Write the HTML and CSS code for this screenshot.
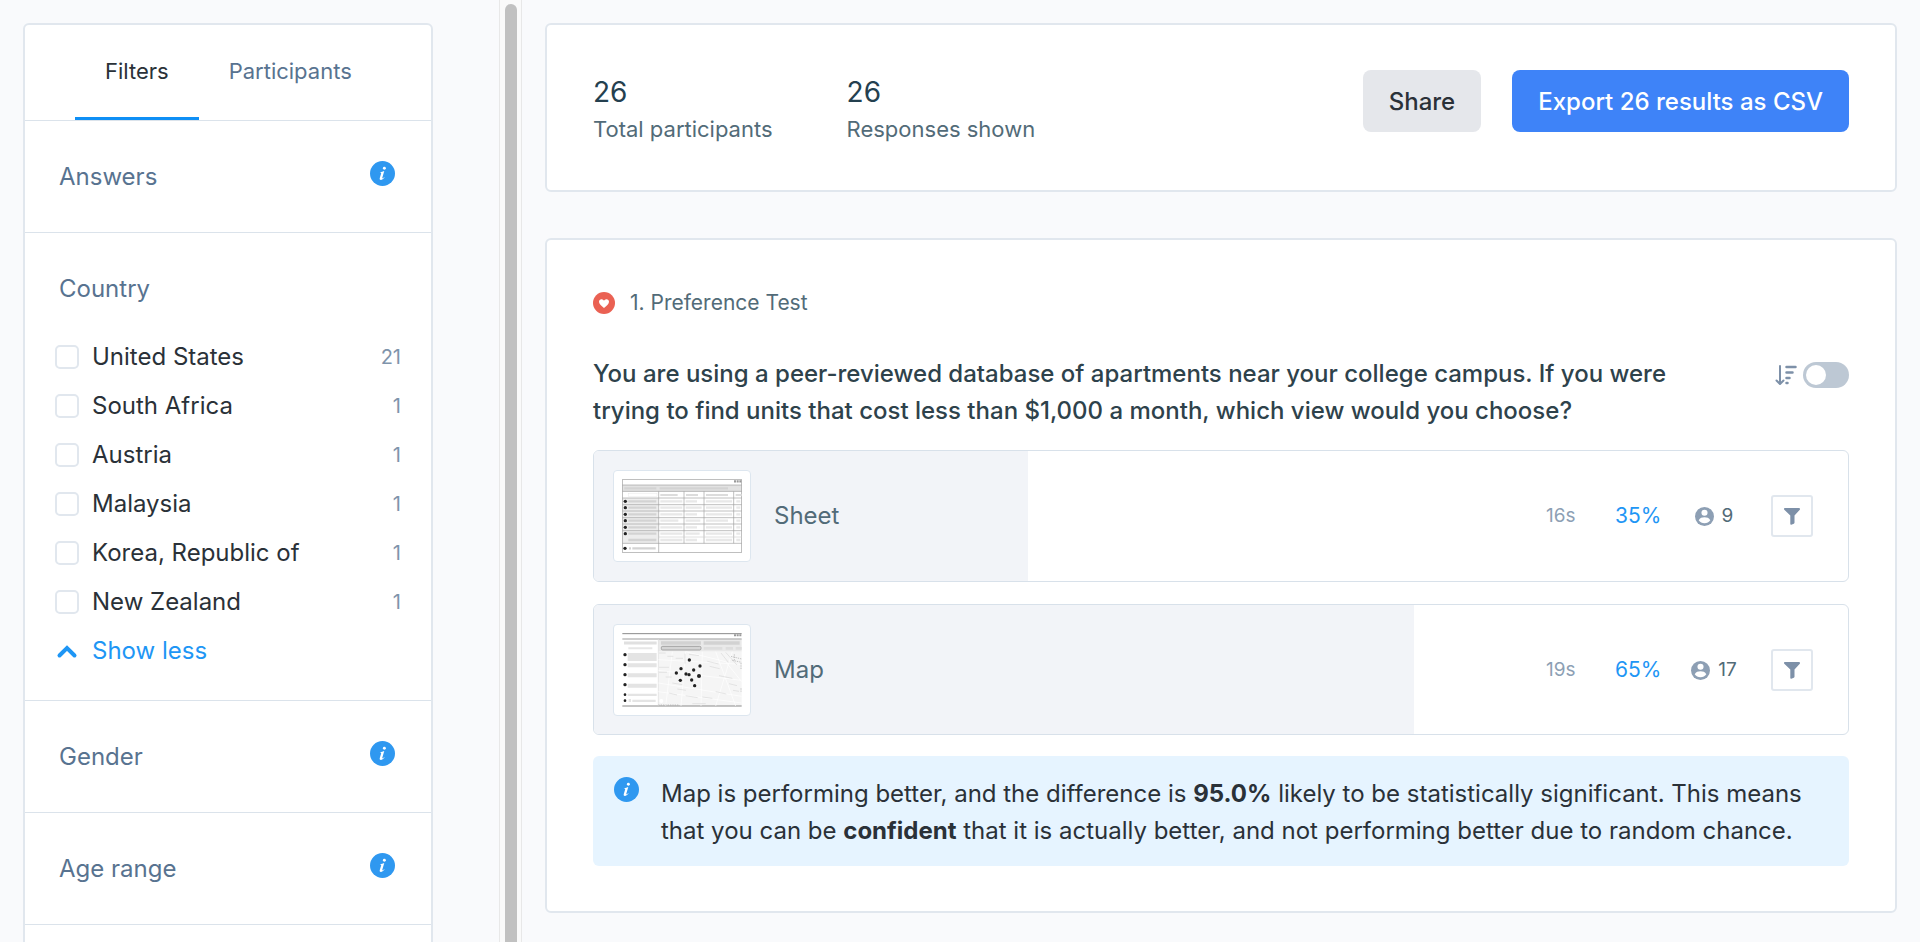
FILE: index.html
```html
<!DOCTYPE html>
<html lang="en">
<head>
<meta charset="utf-8">
<meta name="viewport" content="width=device-width, initial-scale=1">
<title>Test results</title>
<link rel="stylesheet" href="styles.css">
</head>
<body>
<svg class="symbols" aria-hidden="true">
  <symbol id="info" viewBox="0 0 24 24">
    <circle cx="12" cy="12" r="12" fill="#2f98f0"/>
    <circle cx="13.800" cy="6.900" r="1.400" fill="#fff"/>
    <path d="M9.600 10.700c1.500-.1 2.700-.5 4.100-1l-1.900 6.400c-.2.900.5.700 1.700-.6l.5.400c-1.300 1.700-2.500 2.300-3.500 2.300-1.100 0-1.400-.8-1.100-1.900l1.300-4.300c.2-.7-.1-.8-1.200-.9z" fill="#fff"/>
  </symbol>
  <symbol id="person" viewBox="0 0 18 18">
    <circle cx="9" cy="9" r="9" fill="#8d9fb4"/>
    <circle cx="9" cy="5.500" r="2.900" fill="#fff"/>
    <path d="M3.500 12.600C4.800 10.400 6.600 9.800 9 9.800s4.200.6 5.500 2.800C13.200 14.400 11.300 15.300 9 15.300s-4.200-.9-5.500-2.700z" fill="#fff"/>
  </symbol>
  <symbol id="funnel" viewBox="0 0 16 17">
    <path d="M1 0h14c1 0 1.300 1 .8 1.700L10.500 7.500v7.300c0 .5-.3.800-.7 1l-2.500 1c-.5.200-1-.1-1-.7V7.500L.3 1.700C-.3 1 .1 0 1 0z" fill="#7d90a8"/>
  </symbol>
</svg>
<div class="app">
  <aside class="sidebar">
    <div class="panel">
      <nav class="tabs">
        <a class="tab tab-active" href="#filters">Filters</a>
        <a class="tab" href="#participants">Participants</a>
      </nav>
      <section class="group">
        <h2>Answers</h2>
        <svg class="info" role="img" aria-label="Info"><use href="#info"/></svg>
      </section>
      <section class="group group-open">
        <h2>Country</h2>
        <ul class="choices">
          <li><label><input type="checkbox"><span>United States</span></label><span class="count">21</span></li>
          <li><label><input type="checkbox"><span>South Africa</span></label><span class="count">1</span></li>
          <li><label><input type="checkbox"><span>Austria</span></label><span class="count">1</span></li>
          <li><label><input type="checkbox"><span>Malaysia</span></label><span class="count">1</span></li>
          <li><label><input type="checkbox"><span>Korea, Republic of</span></label><span class="count">1</span></li>
          <li><label><input type="checkbox"><span>New Zealand</span></label><span class="count">1</span></li>
        </ul>
        <button class="less" type="button">
          <svg class="chevron" viewBox="0 0 24 24" aria-hidden="true"><path d="M4.500 16.500l7.500-7.500 7.500 7.500" fill="none" stroke="currentColor" stroke-width="4" stroke-linecap="round" stroke-linejoin="miter"/></svg>
          Show less
        </button>
      </section>
      <section class="group">
        <h2>Gender</h2>
        <svg class="info" role="img" aria-label="Info"><use href="#info"/></svg>
      </section>
      <section class="group">
        <h2>Age range</h2>
        <svg class="info" role="img" aria-label="Info"><use href="#info"/></svg>
      </section>
    </div>
  </aside>
  <div class="scrolltrack" aria-hidden="true"><div class="scrollthumb"></div></div>
  <main class="content">
    <section class="card summary">
      <dl class="stats">
        <div><dd>26</dd><dt>Total participants</dt></div>
        <div><dd>26</dd><dt>Responses shown</dt></div>
      </dl>
      <div class="actions">
        <button class="btn" type="button">Share</button>
        <button class="btn btn-primary" type="button">Export 26 results as CSV</button>
      </div>
    </section>
    <section class="card test">
      <div class="kind">
        <svg class="kind-icon" viewBox="0 0 22 22" aria-hidden="true"><circle cx="11" cy="11" r="11" fill="#ea6153"/><path d="M11 16C8 13.500 6 11.800 6 9.700 6 8.100 7.100 7.200 8.400 7.200c1 0 1.900.5 2.600 1.500.7-1 1.600-1.500 2.600-1.500 1.300 0 2.400.9 2.400 2.500 0 2.100-2 3.800-5 6.300z" fill="#fff"/></svg>
        <span>1. Preference Test</span>
      </div>
      <div class="question">
        <h1>You are using a peer-reviewed database of apartments near your college campus. If you were trying to find units that cost less than $1,000 a month, which view would you choose?</h1>
        <label class="sort">
          <svg class="sort-icon" viewBox="0 0 22 22" role="img" aria-label="Sort by result"><g fill="none" stroke="#7d90a8" stroke-width="2" stroke-linecap="round" stroke-linejoin="round"><path d="M5 2v17M1.500 16.500L5 20l3.500-3.500"/><path d="M11.500 3h9M11.500 8.500h6M11.500 14h3M11.500 19h1" stroke-width="2.500"/></g></svg>
          <input class="switch" type="checkbox" role="switch">
        </label>
      </div>
      <div class="options">
        <article class="option">
          <div class="fill" style="width:34.6%"></div>
          <div class="thumb">
            <svg viewBox="0 0 358 222" aria-hidden="true">
              <rect y="18" width="358" height="20" fill="#e2e2e2"/>
              <rect y="57" width="108" height="136" fill="#ededed"/>
              <g fill="none" stroke="#a0a0a0" stroke-width="2">
                <rect x="1" y="1" width="356" height="220"/>
                <path d="M0 18h358M0 37h358M0 57h358M0 77h358M0 96h358M0 116h358M0 135h358M0 155h358M0 193h358M109 37v184M185 37v156M245 37v156M334 37v156"/>
              </g>
              <path d="M109 174h249" stroke="#d0d0d0" stroke-width="2"/>
              <path d="M335 7h22" stroke="#999" stroke-width="7" stroke-dasharray="6 2"/>
              <g stroke="#d3d3d3" stroke-width="7"><path d="M6 28h96M112 28h205"/><path d="M18 67h84M18 86h84M18 106h84M18 125h84M18 145h84M18 164h84M18 183h84M30 208h70M20 208h6"/></g>
              <g stroke="#dcdcdc" stroke-width="6"><path d="M114 48h52M191 48h36M251 48h66M340 48h18"/></g>
              <rect x="18" y="43" width="86" height="10" fill="#fff" stroke="#ddd"/>
              <g stroke="#e8e8e8" stroke-width="7"><path d="M114 67h66M190 67h34M251 67h78M342 67h12M114 86h66M190 86h48M251 86h78M342 86h12M114 106h66M190 106h34M251 106h78M342 106h12M114 125h54M190 125h44M251 125h66M342 125h12M114 145h66M190 145h34M251 145h78M342 145h12M114 164h66M190 164h42M251 164h78M342 164h12M114 183h66M190 183h34M251 183h78M342 183h12"/></g>
              <g fill="#222"><circle cx="9" cy="67" r="5"/><circle cx="9" cy="86" r="5"/><circle cx="9" cy="106" r="5"/><circle cx="9" cy="125" r="5"/><circle cx="9" cy="145" r="5"/><circle cx="9" cy="164" r="5"/><circle cx="8" cy="208" r="5"/></g>
            </svg>
          </div>
          <h3>Sheet</h3>
          <span class="time">16s</span>
          <span class="percent">35%</span>
          <span class="people"><svg aria-hidden="true"><use href="#person"/></svg>9</span>
          <button class="filter" type="button" aria-label="Filter by Sheet"><svg aria-hidden="true"><use href="#funnel"/></svg></button>
        </article>
        <article class="option">
          <div class="fill" style="width:65.4%"></div>
          <div class="thumb">
            <svg viewBox="0 0 358 222" aria-hidden="true">
              <rect x="108" y="18" width="250" height="38" fill="#e9e9e9"/>
              <rect x="108" y="56" width="250" height="163" fill="#f5f5f5"/>
              <path d="M0 2h358M0 219h358" stroke="#8a8a8a" stroke-width="3"/>
              <path d="M0 18h358" stroke="#bdbdbd" stroke-width="5"/>
              <path d="M335 7h22" stroke="#999" stroke-width="6" stroke-dasharray="6 2"/>
              <path d="M108 18v201" stroke="#ddd" stroke-width="2"/>
              <g stroke="#d2d2d2"><path d="M116 30h120M244 30h108" stroke-width="11"/><path d="M244 46h56M310 46h22M340 46h18" stroke-width="8" stroke="#ddd"/><path d="M5 30h98" stroke-width="9" stroke="#e0e0e0"/><path d="M18 46h72" stroke-width="6" stroke="#e6e6e6"/></g>
              <rect x="117" y="40" width="119" height="11" rx="4" fill="#d4d4d4" stroke="#888" stroke-width="2"/>
              <g fill="#e4e4e4"><path d="M16 60h87v24H16zM16 91h87v12H16zM16 121h87v12H16zM16 152h87v12H16zM16 182h87v7H16zM30 200h70v7H30zM19 198h7v9h-7z"/></g>
              <g fill="none" stroke="#fff" stroke-width="2"><path d="M108 80l250 14M108 112l250 30M108 150l250 40M108 176l250 34M150 56l-20 163M190 56l-14 163M240 56l-4 163M280 56l60 163M190 56l120 30 48 60M330 56l-50 163"/></g>
              <g fill="none" stroke="#dadada" stroke-width="2"><path d="M110 60h20M135 70h18M110 103h30M160 76h22M200 64l30 4M262 100l30 7M290 128l40 8M130 132h18M150 150l30 5M140 180l24 6M190 188l36 6M240 192l30 4M280 176l32 7M320 152l24 6M188 62v30M296 60l22 28M310 58l34 38M210 212h40M110 118h24M332 172l18 3M165 168l26 4M255 85l34 8"/></g>
              <g fill="none" stroke="#aaa" stroke-width="2" stroke-dasharray="4 3"><path d="M326 70l32 8M330 82l28 6M108 216h60M356 90v20M336 64v20M356 166v10"/></g>
              <circle cx="117" cy="204" r="6" fill="#fff"/>
              <g fill="#222"><circle cx="8" cy="65" r="5"/><circle cx="8" cy="95" r="5"/><circle cx="8" cy="125" r="5"/><circle cx="8" cy="155" r="5"/><circle cx="8" cy="185" r="4"/><circle cx="8" cy="203" r="4"/>
              <circle cx="201" cy="81" r="5"/><circle cx="233" cy="99" r="5"/><circle cx="176" cy="107" r="5"/><circle cx="214" cy="111" r="5"/><circle cx="162" cy="120" r="5"/><circle cx="191" cy="123" r="5"/><circle cx="200" cy="125" r="5"/><circle cx="230" cy="129" r="6"/><circle cx="174" cy="142" r="5"/><circle cx="208" cy="141" r="5"/><circle cx="217" cy="158" r="5"/></g>
            </svg>
          </div>
          <h3>Map</h3>
          <span class="time">19s</span>
          <span class="percent">65%</span>
          <span class="people"><svg aria-hidden="true"><use href="#person"/></svg>17</span>
          <button class="filter" type="button" aria-label="Filter by Map"><svg aria-hidden="true"><use href="#funnel"/></svg></button>
        </article>
      </div>
      <div class="note">
        <svg class="info" aria-hidden="true"><use href="#info"/></svg>
        <p>Map is performing better, and the difference is <strong>95.0%</strong> likely to be statistically significant. This means that you can be <strong>confident</strong> that it is actually better, and not performing better due to random chance.</p>
      </div>
    </section>
  </main>
</div>
</body>
</html>
```

FILE: styles.css
```css
* {
  box-sizing: border-box;
}

body {
  margin: 0;
  background: #f9fafc;
  color: #2a3138;
  font: 24px/36px Inter, "Liberation Sans", sans-serif;
}

h1, h2, h3, p, dl, dd, ul {
  margin: 0;
  padding: 0;
  font-size: inherit;
  font-weight: 400;
}

button {
  font: inherit;
  cursor: pointer;
}

a {
  text-decoration: none;
}

.symbols {
  display: none;
}

.app {
  display: grid;
  grid-template-columns: 499px 23px 1fr;
  height: 100vh;
  overflow: hidden;
}

/* Sidebar */
.sidebar {
  padding: 23px 66px 0 23px;
  overflow: hidden;
}

.panel {
  min-height: 100vh;
  background: #fff;
  border: 2px solid #e1e7ee;
  border-radius: 6px;
}

.tabs {
  display: flex;
  height: 96px;
  padding: 0 50px;
  border-bottom: 1px solid #dbe3eb;
}

.tab {
  display: flex;
  align-items: center;
  padding: 0 30px;
  font-size: 22px;
  color: #587390;
  border-bottom: 3px solid transparent;
}

.tab-active {
  color: #2a3138;
  border-bottom-color: #0f8ff5;
}

.group {
  display: flex;
  justify-content: space-between;
  padding: 38px 36px 37px 34px;
  border-bottom: 1px solid #dbe3eb;
}

.group h2 {
  color: #587390;
}

.group-open {
  display: block;
  padding: 38px 30px 25px;
}

.group-open h2 {
  padding: 0 4px;
}

.info {
  flex: none;
  width: 25px;
  height: 25px;
  margin-top: 2px;
}

.choices {
  margin-top: 25px;
  list-style: none;
}

.choices li,
.choices label {
  display: flex;
  align-items: center;
}

.choices li {
  justify-content: space-between;
  height: 49px;
}

.choices label {
  gap: 13px;
}

.choices input {
  appearance: none;
  width: 24px;
  height: 24px;
  margin: 0;
  background: #fff;
  border: 2px solid #e1e7ee;
  border-radius: 5px;
}

.count {
  font-size: 20px;
  color: #7f94ab;
}

.less {
  display: flex;
  align-items: center;
  gap: 13px;
  height: 49px;
  padding: 0;
  background: none;
  border: 0;
  color: #1e96f5;
}

.chevron {
  width: 24px;
  height: 24px;
}

.scrolltrack {
  padding: 4px 4px 0;
  background: #fafafa;
  border: solid #e8e8e8;
  border-width: 0 1px;
}

.scrollthumb {
  width: 12px;
  height: 100%;
  margin: 0 auto;
  background: #c1c1c1;
  border-radius: 6px 6px 0 0;
}

/* Results */
.content {
  padding: 23px;
}

.card {
  background: #fff;
  border: 2px solid #e1e7ee;
  border-radius: 6px;
}

.summary {
  display: flex;
  justify-content: space-between;
  align-items: flex-start;
  padding: 45px 46px 37px;
}

.stats {
  display: flex;
  gap: 74px;
  padding: 4px 0 5px;
}

.stats div {
  display: flex;
  flex-direction: column;
}

.stats dd {
  font-size: 28px;
  color: #24404f;
}

.stats dt {
  font-size: 22px;
  line-height: 38px;
  color: #526b78;
}

.actions {
  display: flex;
  gap: 31px;
}

.btn {
  height: 62px;
  padding: 2px 26px 0;
  background: #e5e7eb;
  border: 0;
  border-radius: 8px;
  font-weight: 500;
  color: #2a3138;
}

.btn-primary {
  background: #3e83f8;
  color: #fff;
}

.test {
  margin-top: 46px;
  padding: 45px 46px;
}

.kind {
  display: flex;
  align-items: center;
  gap: 15px;
  font-size: 21px;
  color: #526b78;
}

.kind-icon {
  width: 22px;
  height: 22px;
}

.question {
  display: flex;
  justify-content: space-between;
  align-items: flex-start;
  gap: 60px;
  margin-top: 34px;
}

.question h1 {
  font-weight: 500;
  line-height: 37px;
  color: #2e424b;
}

.sort {
  display: flex;
  align-items: center;
  gap: 6px;
  margin-top: 7px;
}

.sort-icon {
  width: 22px;
  height: 22px;
}

.switch {
  appearance: none;
  display: flex;
  width: 46px;
  height: 26px;
  margin: 0;
  padding: 3px;
  background: #bdc8d4;
  border-radius: 13px;
}

.switch::before {
  content: "";
  width: 20px;
  height: 20px;
  background: #fff;
  border-radius: 50%;
}

.options {
  display: grid;
  gap: 22px;
  margin: 21px 0;
}

.option {
  position: relative;
  display: flex;
  align-items: center;
  padding: 19px 35px 18px 19px;
  overflow: hidden;
  border: 1px solid #d8e1ea;
  border-radius: 6px;
}

.option:first-child {
  padding-bottom: 19px;
}

.fill {
  position: absolute;
  top: 0;
  bottom: 0;
  left: 0;
  background: #f2f4f8;
}

.thumb {
  position: relative;
  display: flex;
  padding: 8px;
  background: #fff;
  border: 1px solid #dde6ef;
  border-radius: 4px;
}

.thumb svg {
  width: 120px;
  height: 74px;
}

.option h3 {
  position: relative;
  flex: 1;
  margin-left: 23px;
  color: #526b78;
}

.time {
  width: 69px;
  font-size: 19px;
  color: #8d9fb4;
}

.percent {
  width: 74px;
  font-size: 21px;
  color: #1e96f5;
}

.people {
  display: flex;
  justify-content: center;
  align-items: center;
  gap: 8px;
  width: 50px;
  margin-right: 32px;
  font-size: 19px;
  color: #526b78;
}

.people svg {
  width: 19px;
  height: 19px;
}

.filter {
  display: flex;
  justify-content: center;
  align-items: center;
  width: 42px;
  height: 42px;
  padding: 0;
  background: #fff;
  border: 2px solid #e1e7ee;
  border-radius: 3px;
}

.filter svg {
  width: 16px;
  height: 17px;
}

.note {
  display: flex;
  gap: 22px;
  padding: 19px 21px 17px;
  background: #e6f4ff;
  border-radius: 6px;
}

.note p {
  line-height: 37px;
}

.note strong {
  font-weight: 700;
}
```
